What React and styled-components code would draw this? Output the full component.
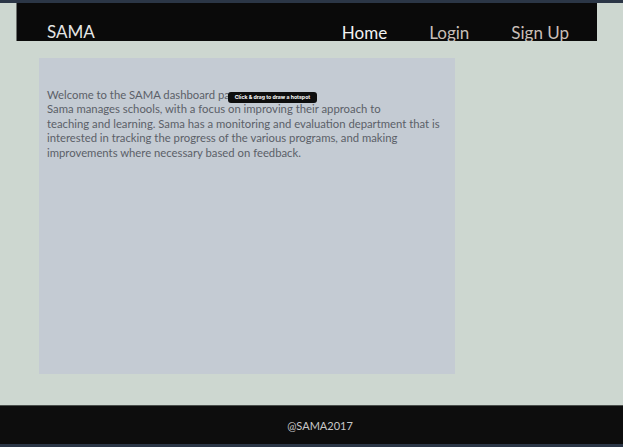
import React from "react";
import styled, { createGlobalStyle } from "styled-components";

const Global = createGlobalStyle`
  html, body { margin: 0; padding: 0; }
  body {
    background: #cdd7d0;
    font-family: Lato, "Noto Sans", sans-serif;
    width: 623px;
    height: 447px;
    overflow: hidden;
  }
`;

const Page = styled.div`
  display: flex;
  flex-direction: column;
  height: 447px;
`;

const TopStrip = styled.div`
  height: 3px;
  background: #2b3646;
  flex: none;
`;

const Header = styled.header`
  flex: none;
  margin: 0 26px 0 16px;
  height: 38px;
  background: #0a0a0a;
  border-left: 1px solid #6b6f6d;
  box-sizing: border-box;
  overflow: hidden;
  display: flex;
  align-items: flex-start;
  justify-content: space-between;
  padding: 19px 28px 0 30px;
`;

const Brand = styled.div`
  color: #e6e6e6;
  font-size: 17px;
  line-height: 20px;
`;

const Nav = styled.nav`
  display: flex;
  gap: 42px;
  margin-top: 1px;
`;

const NavLink = styled.a`
  color: ${(p) => (p.$active ? "#f2f2f2" : "#c9bfb8")};
  font-size: 17px;
  line-height: 20px;
  text-decoration: none;
`;

const Main = styled.main`
  flex: 1;
  padding: 17px 0 0 39px;
`;

const Panel = styled.section`
  position: relative;
  width: 416px;
  height: 316px;
  background: #c4cbd3;
  box-sizing: border-box;
  padding: 30px 8px 0 8px;
  color: #5b6068;
  font-size: 11.3px;
  line-height: 14.4px;
`;

const Text = styled.p`
  margin: 0;
`;

const Tooltip = styled.div`
  position: absolute;
  left: 189px;
  top: 34px;
  width: 89px;
  height: 11px;
  background: #0e0e0e;
  border-radius: 3px;
  color: #fff;
  font-family: Inter, sans-serif;
  font-weight: 700;
  font-size: 5.2px;
  line-height: 11px;
  text-align: center;
  white-space: nowrap;
`;

const Footer = styled.footer`
  flex: none;
  height: 39px;
  background: #0d0d0d;
  border-top: 1px solid #4a4f4c;
  box-sizing: border-box;
  display: flex;
  align-items: center;
  justify-content: center;
  color: #c8c8c8;
  font-size: 11px;
  padding-left: 17px;
`;

const BottomStrip = styled.div`
  height: 3px;
  background: #2b3646;
  flex: none;
`;

export default function App() {
  return (
    <>
      <Global />
      <Page>
        <TopStrip />
        <Header>
          <Brand>SAMA</Brand>
          <Nav>
            <NavLink $active href="#">Home</NavLink>
            <NavLink href="#">Login</NavLink>
            <NavLink href="#">Sign Up</NavLink>
          </Nav>
        </Header>
        <Main>
          <Panel>
            <Text>
              Welcome to the SAMA dashboard page
              <br />
              Sama manages schools, with a focus on improving their approach to
              <br />
              teaching and learning. Sama has a monitoring and evaluation department that is
              interested in tracking the progress of the various programs, and making
              improvements where necessary based on feedback.
            </Text>
            <Tooltip>Click &amp; drag to draw a hotspot</Tooltip>
          </Panel>
        </Main>
        <Footer>@SAMA2017</Footer>
        <BottomStrip />
      </Page>
    </>
  );
}
